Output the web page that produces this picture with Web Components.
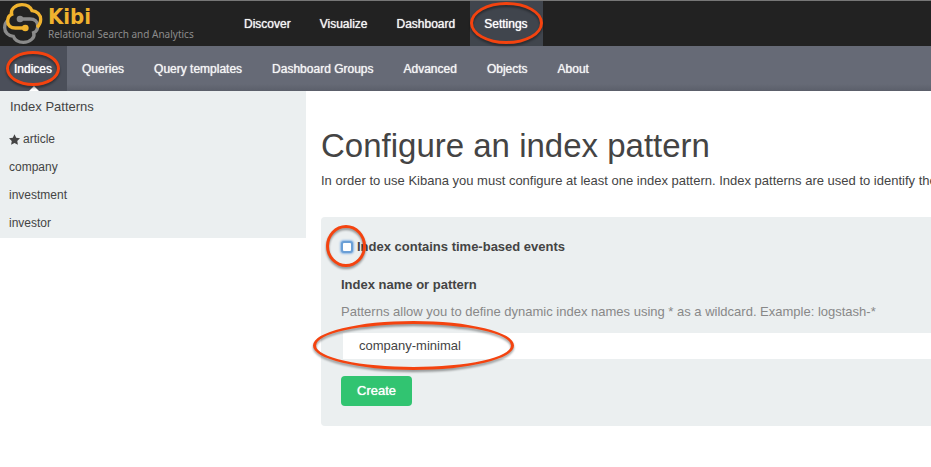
<!DOCTYPE html>
<html lang="en">
<head>
<meta charset="utf-8">
<meta name="viewport" content="width=device-width, initial-scale=1">
<title>Kibi - Settings</title>
<style>
body { margin: 0; background: #fff; color: #444; font: 13px/18px "Liberation Sans", Arial, sans-serif; }
</style>
</head>
<body>
<kibi-app></kibi-app>
<script>
const define = (name, html) => customElements.define(name, class extends HTMLElement {
  constructor() {
    super();
    const t = document.createElement('template');
    t.innerHTML = html;
    this.attachShadow({ mode: 'open' }).appendChild(t.content.cloneNode(true));
  }
});

define('mark-ring', `
<style>
:host { position: absolute; box-sizing: border-box; border: 3px solid #f4430f; border-radius: 50%; pointer-events: none; z-index: 2;
  filter: drop-shadow(0 2px 1px rgba(0,0,0,.4)); }
</style>`);

define('kibi-logo', `
<style>
:host { display: flex; width: 230px; flex: none; }
a { display: flex; gap: 2px; text-decoration: none; }
svg { width: 46px; height: 46px; flex: none; }
.words { display: flex; flex-direction: column; padding-top: 5px; }
b { font: bold 22px/22px "DejaVu Sans Condensed", "DejaVu Sans", sans-serif; color: #f0b32e; }
small { font: 10px/12px "Noto Sans", sans-serif; color: #8c8c8c; white-space: nowrap; }
</style>
<a href="#">
<svg viewBox="0 3 138 138" fill="none" stroke-width="10" stroke-linecap="butt" aria-hidden="true">
<g stroke="#8a8a8a" transform="rotate(180 68 70.500)"><path d="M76 84H46C32 84 23 76 23 64C23 54 27 46 35 43C30 28 46 14 66 14C80 14 91 20 96 32C111 33 122 44 122 58C122 68 118 76 111 82"/><circle cx="76" cy="84" r="10" fill="#8a8a8a" stroke="none"/></g>
<g stroke="#f0b32e"><path d="M76 84H46C32 84 23 76 23 64C23 54 27 46 35 43C30 28 46 14 66 14C80 14 91 20 96 32C111 33 122 44 122 58C122 68 118 76 111 82"/><circle cx="76" cy="84" r="10" fill="#f0b32e" stroke="none"/></g>
</svg>
<span class="words"><b>Kibi</b><small>Relational Search and Analytics</small></span>
</a>`);

define('nav-item', `
<style>
:host { display: flex; position: relative; }
a { display: flex; align-items: center; padding: 0 15px 0 14px; font-size: 12px; color: #f4f5f5; text-decoration: none; white-space: nowrap; text-shadow: 0 0 1px currentColor; }
:host([current]) a { background: var(--current); color: #fff; }
:host([arrow])::after { content: ""; position: absolute; bottom: 0; left: 50%; margin-left: -5px; border: 5px solid transparent; border-top: 0; border-bottom-color: #fff; }
</style>
<a href="#"><slot></slot></a><slot name="mark"></slot>`);

define('top-bar', `
<style>
:host { display: flex; height: 45px; background: #222; border-top: 1px solid #777; --current: #40454d; }
nav { display: flex; }
mark-ring { inset: 1px 0 2px 0; }
</style>
<kibi-logo></kibi-logo>
<nav aria-label="Main"><nav-item>Discover</nav-item><nav-item>Visualize</nav-item><nav-item>Dashboard</nav-item><nav-item current>Settings<mark-ring slot="mark"></mark-ring></nav-item></nav>`);

define('sub-bar', `
<style>
:host { display: flex; height: 45px; background: linear-gradient(#666a76 38px, #5b5f6a); --current: #4b4f5a; }
nav { display: flex; gap: 1px; }
mark-ring { inset: 5px 7px 5px 6px; }
</style>
<nav aria-label="Settings"><nav-item current arrow>Indices<mark-ring slot="mark"></mark-ring></nav-item><nav-item>Queries</nav-item><nav-item>Query templates</nav-item><nav-item>Dashboard Groups</nav-item><nav-item>Advanced</nav-item><nav-item>Objects</nav-item><nav-item>About</nav-item></nav>`);

define('pattern-list', `
<style>
:host { display: block; background: #ebeff0; padding-bottom: 1px; }
h2 { margin: 0; padding: 7px 10px 9px; font-size: 13px; line-height: 18px; font-weight: normal; }
ul { margin: 0; padding: 0; list-style: none; }
a { display: flex; align-items: center; gap: 3px; height: 28px; padding: 0 9px; font-size: 12px; color: #444; text-decoration: none; }
svg { width: 11px; height: 11px; }
</style>
<h2>Index Patterns</h2>
<ul>
<li><a href="#"><svg viewBox="0 0 22 21" fill="#444" aria-hidden="true"><path d="M11 0l3.400 6.900 7.600 1.100-5.500 5.400 1.300 7.600-6.800-3.600-6.800 3.600 1.300-7.600L0 8l7.600-1.100z"/></svg>article</a></li>
<li><a href="#">company</a></li>
<li><a href="#">investment</a></li>
<li><a href="#">investor</a></li>
</ul>`);

define('pattern-form', `
<style>
:host { display: block; background: #ebeff0; border-radius: 4px 0 0 4px; padding: 20px 0 20px 20px; }
form { display: flex; flex-direction: column; align-items: flex-start; }
label { font-weight: bold; }
.check { display: flex; align-items: center; gap: 4px; height: 20px; margin-bottom: 19px; }
.box, .field { position: relative; display: flex; }
.box mark-ring { inset: -16px -13px -14px -15px; }
.check input { appearance: none; box-sizing: border-box; width: 12px; height: 12px; margin: 0; border: 2px solid #6a9fd6; border-radius: 3px; background: #fff; box-shadow: 0 0 2px 1px #8fb8e4; }
p { margin: 9px 0 12px; color: #888; }
.field { align-self: stretch; padding-left: 2px; }
.field input { flex: 1; min-width: 0; box-sizing: border-box; height: 26px; border: 0; border-radius: 0; padding: 0 16px 2px; background: #fff; font: inherit; color: #444; outline: 0; }
.field mark-ring { left: -28px; top: -12px; width: 201px; height: 49px; }
button { margin-top: 17px; height: 30px; padding: 0 16px; border: 0; border-radius: 4px; background: #31c471; color: #fff; font: inherit; text-shadow: 0 0 1px #fff; }
</style>
<form>
<div class="check"><span class="box"><input type="checkbox" id="time"><mark-ring></mark-ring></span><label for="time">Index contains time-based events</label></div>
<label for="name">Index name or pattern</label>
<p>Patterns allow you to define dynamic index names using * as a wildcard. Example: logstash-*</p>
<div class="field"><input id="name" type="text" value="company-minimal"><mark-ring></mark-ring></div>
<button type="button">Create</button>
</form>`);

define('kibi-app', `
<style>
:host { display: block; }
.page { display: grid; grid-template-columns: 306px minmax(0, 1fr); align-items: start; }
main { padding: 34px 0 41px 15px; }
h1 { margin: 0; font-size: 33px; line-height: 42px; font-weight: normal; }
.intro { margin: 5px 0 27px; white-space: nowrap; overflow: hidden; }
</style>
<top-bar></top-bar>
<sub-bar></sub-bar>
<div class="page">
<pattern-list></pattern-list>
<main>
<h1>Configure an index pattern</h1>
<p class="intro">In order to use Kibana you must configure at least one index pattern. Index patterns are used to identify the</p>
<pattern-form></pattern-form>
</main>
</div>`);
</script>
</body>
</html>
